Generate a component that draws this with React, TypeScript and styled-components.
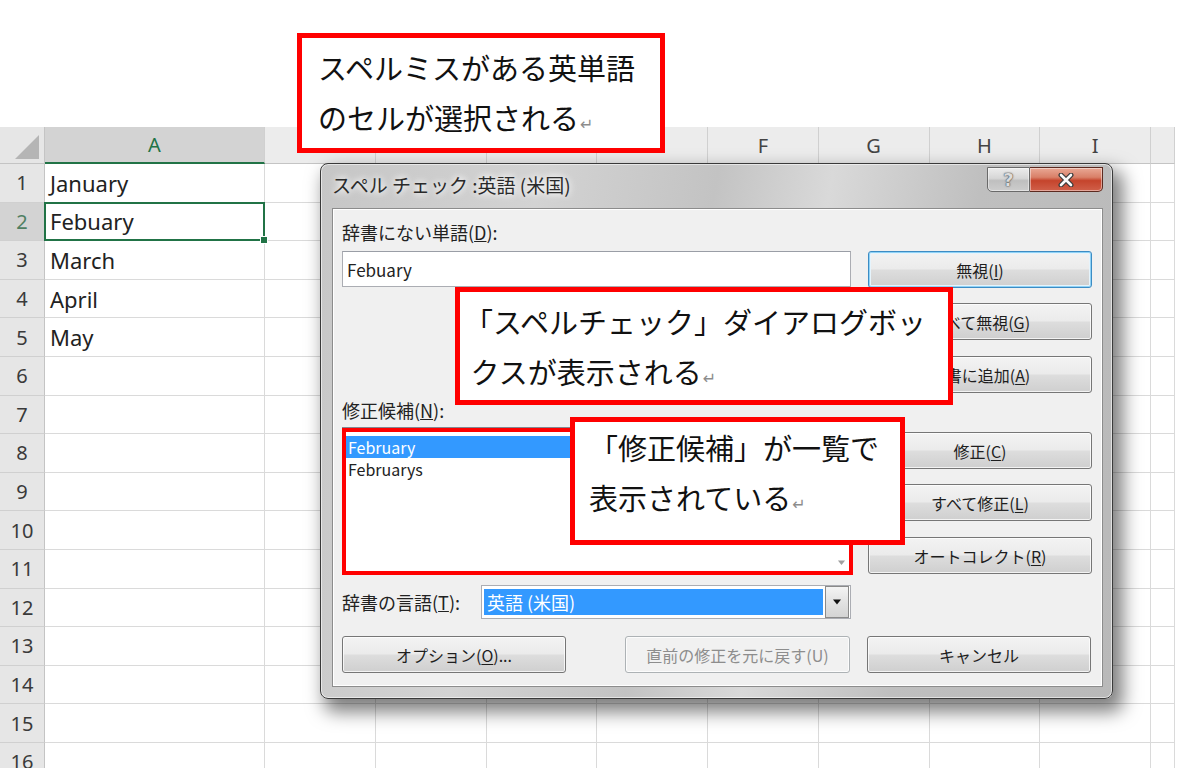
import styled, { createGlobalStyle } from 'styled-components'

const GlobalStyle = createGlobalStyle`
  html, body {
    margin: 0;
    padding: 0;
    background: #fff;
  }
  body {
    font-family: "Noto Sans", "Noto Sans CJK JP", sans-serif;
  }
`

const JP = `"Noto Sans CJK JP", "Noto Sans", sans-serif`
const ROW_H = 38.6
// B-E headers sit under the first callout and the dialog, so they stay blank
const COLS = ['A', '', '', '', '', 'F', 'G', 'H', 'I', '']
const CELLS = ['January', 'Febuary', 'March', 'April', 'May']

const Page = styled.div`
  position: relative;
  width: 1200px;
  height: 768px;
  overflow: hidden;
  background: #fff;
`

const TopGap = styled.div`
  height: 127px;
`

const Sheet = styled.div`
  display: grid;
  grid-template-columns: 45px 220px repeat(8, 110.75px) 24px;
  grid-template-rows: 37px;
  grid-auto-rows: ${ROW_H}px;
  width: 1175px;
`

const Corner = styled.div`
  background: #e6e6e6;
  border-right: 1px solid #c4c4c4;
  border-bottom: 1px solid #c4c4c4;
  display: flex;
  align-items: flex-end;
  justify-content: flex-end;
  padding: 0 5px 4px 0;
  box-sizing: border-box;
`

const ColHead = styled.div<{ $active?: boolean }>`
  background: ${p => (p.$active ? '#d3d3d3' : '#ececec')};
  border-right: 1px solid #d0d0d0;
  border-bottom: ${p => (p.$active ? '2px solid #217346' : '1px solid #c4c4c4')};
  color: ${p => (p.$active ? '#217346' : '#444')};
  font-size: 20px;
  display: flex;
  align-items: center;
  justify-content: center;
  box-sizing: border-box;
`

const RowHead = styled.div<{ $active?: boolean }>`
  background: ${p => (p.$active ? '#d3d3d3' : '#e6e6e6')};
  border-right: 1px solid #c4c4c4;
  border-bottom: 1px solid #d0d0d0;
  color: ${p => (p.$active ? '#4f7f62' : '#3a3a3a')};
  font-size: 20px;
  display: flex;
  align-items: center;
  justify-content: center;
  box-sizing: border-box;
`

const Cell = styled.div<{ $selected?: boolean }>`
  position: relative;
  border-right: 1px solid #dadada;
  border-bottom: 1px solid #dadada;
  box-sizing: border-box;
  font-size: 22px;
  color: #222;
  padding-left: 5px;
  display: flex;
  align-items: center;
  white-space: nowrap;

  ${p =>
    p.$selected &&
    `
    &::before {
      content: '';
      position: absolute;
      inset: -1px -1px -1px -1px;
      border: 2px solid #217346;
      z-index: 1;
    }
    &::after {
      content: '';
      position: absolute;
      right: -4px;
      bottom: -4px;
      width: 6px;
      height: 6px;
      background: #217346;
      border: 1px solid #fff;
      z-index: 2;
    }
  `}
`

/* ---------- dialog ---------- */

const Dialog = styled.div`
  position: absolute;
  left: 320px;
  top: 163px;
  width: 793px;
  display: flex;
  flex-direction: column;
  box-sizing: border-box;
  border: 1px solid #3a3a3a;
  border-radius: 8px;
  background: linear-gradient(100deg, #c6c6c6 0%, #d3d3d3 25%, #c3c3c3 45%, #d9d9d9 58%, #bfbfbf 75%, #b9b9b9 100%);
  box-shadow:
    inset 0 0 0 1px rgba(255, 255, 255, 0.55),
    7px 10px 18px 3px rgba(0, 0, 0, 0.5);
  z-index: 5;
  font-family: ${JP};
`

const TitleBar = styled.div`
  height: 44px;
  display: flex;
  align-items: flex-start;
  padding: 0 9px 0 11px;
`

const Title = styled.div`
  margin-top: 10px;
  font-size: 19px;
  line-height: 22px;
  color: #2a2a2a;
  text-shadow: 0 0 6px #fff, 0 0 10px #fff;
  white-space: nowrap;
`

const CaptionButtons = styled.div`
  margin-left: auto;
  margin-top: 3px;
  display: flex;
`

const CaptionButton = styled.div<{ $close?: boolean }>`
  width: ${p => (p.$close ? '73px' : '43px')};
  height: 25px;
  box-sizing: border-box;
  display: flex;
  align-items: center;
  justify-content: center;
  border: 1px solid ${p => (p.$close ? '#5c2a20' : '#6a6a6a')};
  border-left-width: ${p => (p.$close ? '0' : '1px')};
  border-radius: ${p => (p.$close ? '0 0 5px 0' : '0 0 0 5px')};
  background: ${p =>
    p.$close
      ? 'linear-gradient(#e9a895 0%, #d98068 40%, #c5442c 55%, #d0604a 100%)'
      : 'linear-gradient(#ececec 0%, #d6d6d6 45%, #bfbfbf 55%, #cdcdcd 100%)'};
  box-shadow: inset 0 0 0 1px rgba(255, 255, 255, 0.45);
  font-family: "DejaVu Sans", sans-serif;
  font-size: 18px;
  font-weight: bold;
  color: #dcdcdc;
  text-shadow: 0 0 1px #333, 0 0 2px #555;
`

const Panel = styled.div`
  margin: 0 9px 11px 11px;
  background: #f0f0f0;
  border: 1px solid #8c8c8c;
  box-shadow: inset 0 0 0 1px #fff;
  padding: 0 11px 13px 9px;
`

const MainRow = styled.div`
  display: grid;
  grid-template-columns: 509px 224px;
  column-gap: 17px;
`

const LeftCol = styled.div`
  display: flex;
  flex-direction: column;
`

const FieldLabel = styled.div<{ $top: number; $bottom: number }>`
  margin-top: ${p => p.$top}px;
  margin-bottom: ${p => p.$bottom}px;
  font-size: 18px;
  line-height: 20px;
  color: #222;
  white-space: nowrap;
`

const TextBox = styled.div`
  height: 36px;
  box-sizing: border-box;
  background: #fff;
  border: 1px solid #abadb3;
  border-top-color: #9a9ea6;
  font-size: 17px;
  color: #222;
  padding-left: 4px;
  display: flex;
  align-items: center;
`

const ListWrap = styled.div`
  position: relative;
  height: 148px;
  box-sizing: border-box;
  background: #fff;
  border: 1px solid #828790;
  display: flex;
`

const ListItems = styled.div`
  flex: 1;
  padding: 8px 0 0 3px;
`

const ListItem = styled.div<{ $selected?: boolean }>`
  height: 22px;
  line-height: 22px;
  font-size: 16px;
  padding-left: 2px;
  overflow: hidden;
  color: ${p => (p.$selected ? '#fff' : '#222')};
  background: ${p => (p.$selected ? '#3399ff' : 'transparent')};
`

const ScrollTrack = styled.div`
  width: 18px;
  display: flex;
  flex-direction: column;
  justify-content: flex-end;
  align-items: center;
  padding-bottom: 9px;
`

const RedFrame = styled.div`
  position: absolute;
  inset: 0 -3px -1px -1px;
  border: 4px solid #ff0000;
  pointer-events: none;
`

const ButtonCol = styled.div`
  display: flex;
  flex-direction: column;
  padding-top: 42px;
`

const Button = styled.div<{ $default?: boolean; $disabled?: boolean; $gap?: number }>`
  height: 37px;
  margin-top: ${p => p.$gap ?? 0}px;
  box-sizing: border-box;
  display: flex;
  align-items: center;
  justify-content: center;
  border-radius: 3px;
  font-size: 16px;
  white-space: nowrap;
  color: ${p => (p.$disabled ? '#8d8d8d' : '#1e1e1e')};
  border: 1px solid ${p => (p.$default ? '#3c8cc4' : p.$disabled ? '#adb2b5' : '#767676')};
  background: ${p =>
    p.$disabled
      ? '#f1f1f1'
      : 'linear-gradient(#f3f3f3 0%, #ebebeb 48%, #dddddd 52%, #cfcfcf 100%)'};
  box-shadow: ${p =>
    p.$default
      ? 'inset 0 0 0 1px #8fd2f6, inset 0 0 0 2px #e6f4fc'
      : 'inset 0 0 0 1px rgba(255, 255, 255, 0.75)'};

  u {
    text-underline-offset: 2px;
  }
`

const LangRow = styled.div`
  margin-top: 10px;
  height: 34px;
  display: flex;
  align-items: center;
`

const LangLabel = styled.div`
  width: 139px;
  font-size: 18px;
  color: #222;
  white-space: nowrap;
`

const Combo = styled.div`
  width: 370px;
  height: 34px;
  box-sizing: border-box;
  background: #fff;
  border: 1px solid #abadb3;
  padding: 3px 1px 3px 2px;
  display: flex;
  gap: 2px;
`

const ComboValue = styled.div`
  flex: 1;
  background: #3399ff;
  color: #fff;
  font-size: 18px;
  padding-left: 3px;
  display: flex;
  align-items: center;
`

const ComboArrow = styled.div`
  width: 24px;
  margin: -3px 0;
  box-sizing: border-box;
  border: 1px solid #8a8a8a;
  background: linear-gradient(#f4f4f4, #e2e2e2 50%, #d4d4d4);
  display: flex;
  align-items: center;
  justify-content: center;
`

const BottomRow = styled.div`
  margin-top: 17px;
  display: grid;
  grid-template-columns: 224px 1fr 225px 224px;
  column-gap: 17px;
`

/* ---------- callouts ---------- */

const Callout = styled.div<{ $x: number; $y: number; $w: number; $h: number; $pad: string }>`
  position: absolute;
  left: ${p => p.$x}px;
  top: ${p => p.$y}px;
  width: ${p => p.$w}px;
  height: ${p => p.$h}px;
  box-sizing: border-box;
  border: 5px solid #ff0000;
  background: #fff;
  padding: ${p => p.$pad};
  font-family: ${JP};
  font-size: 29px;
  line-height: 50px;
  color: #111;
  white-space: nowrap;
  z-index: 10;
`

const Ret = styled.span`
  font-family: "DejaVu Sans", sans-serif;
  font-size: 16px;
  color: #8c8c8c;
  margin-left: 1px;
`

function DownTriangle({ color, size }: { color: string; size: number }) {
  return (
    <svg width={size} height={size * 0.6} viewBox="0 0 10 6">
      <path d="M1 0.5 L9 0.5 L5 5.5 Z" fill={color} />
    </svg>
  )
}

export default function App() {
  const rows = Array.from({ length: 16 }, (_, i) => i + 1)

  return (
    <Page>
      <GlobalStyle />
      <TopGap />
      <Sheet>
        <Corner>
          <svg width="24" height="24" viewBox="0 0 24 24">
            <path d="M24 0 L24 24 L0 24 Z" fill="#b5b5b5" />
          </svg>
        </Corner>
        {COLS.map((c, i) => (
          <ColHead key={'h' + i} $active={c === 'A'}>
            {c}
          </ColHead>
        ))}
        {rows.map(r => (
          <>
            <RowHead key={'r' + r} $active={r === 2}>
              {r}
            </RowHead>
            {COLS.map((_, ci) => (
              <Cell key={r + '-' + ci} $selected={r === 2 && ci === 0}>
                {ci === 0 ? CELLS[r - 1] ?? '' : ''}
              </Cell>
            ))}
          </>
        ))}
      </Sheet>

      <Dialog>
        <TitleBar>
          <Title>スペル チェック :英語 (米国)</Title>
          <CaptionButtons>
            <CaptionButton>?</CaptionButton>
            <CaptionButton $close>
              <svg width="16" height="14" viewBox="0 0 16 14">
                <path d="M3 2 L13 12 M13 2 L3 12" stroke="#3b3b3b" strokeWidth="5" strokeLinecap="round" />
                <path d="M3 2 L13 12 M13 2 L3 12" stroke="#fafafa" strokeWidth="2.6" strokeLinecap="round" />
              </svg>
            </CaptionButton>
          </CaptionButtons>
        </TitleBar>

        <Panel>
          <MainRow>
            <LeftCol>
              <FieldLabel $top={13} $bottom={9}>
                辞書にない単語(<u>D</u>):
              </FieldLabel>
              <TextBox>Febuary</TextBox>
              <FieldLabel $top={113} $bottom={7}>
                修正候補(<u>N</u>):
              </FieldLabel>
              <ListWrap>
                <ListItems>
                  <ListItem $selected>February</ListItem>
                  <ListItem>Februarys</ListItem>
                </ListItems>
                <ScrollTrack>
                  <DownTriangle color="#a0a0a0" size={9} />
                </ScrollTrack>
                <RedFrame />
              </ListWrap>
            </LeftCol>

            <ButtonCol>
              <Button $default>
                無視(<u>I</u>)
              </Button>
              <Button $gap={15}>
                すべて無視(<u>G</u>)
              </Button>
              <Button $gap={16}>
                辞書に追加(<u>A</u>)
              </Button>
              <Button $gap={39}>
                修正(<u>C</u>)
              </Button>
              <Button $gap={15}>
                すべて修正(<u>L</u>)
              </Button>
              <Button $gap={16}>
                オートコレクト(<u>R</u>)
              </Button>
            </ButtonCol>
          </MainRow>

          <LangRow>
            <LangLabel>
              辞書の言語(<u>T</u>):
            </LangLabel>
            <Combo>
              <ComboValue>英語 (米国)</ComboValue>
              <ComboArrow>
                <DownTriangle color="#111" size={10} />
              </ComboArrow>
            </Combo>
          </LangRow>

          <BottomRow>
            <Button>
              オプション(<u>O</u>)...
            </Button>
            <div />
            <Button $disabled>直前の修正を元に戻す(U)</Button>
            <Button>キャンセル</Button>
          </BottomRow>
        </Panel>
      </Dialog>

      <Callout $x={297} $y={33} $w={368} $h={120} $pad="4px 0 0 16px">
        スペルミスがある英単語
        <br />
        のセルが選択される<Ret>↵</Ret>
      </Callout>

      <Callout $x={455} $y={287} $w={498} $h={118} $pad="4px 0 0 4px">
        「スペルチェック」ダイアログボッ
        <br />
        &nbsp;クスが表示される<Ret>↵</Ret>
      </Callout>

      <Callout $x={570} $y={417} $w={335} $h={128} $pad="0 0 0 14px">
        「修正候補」が一覧で
        <br />
        表示されている<Ret>↵</Ret>
      </Callout>
    </Page>
  )
}
